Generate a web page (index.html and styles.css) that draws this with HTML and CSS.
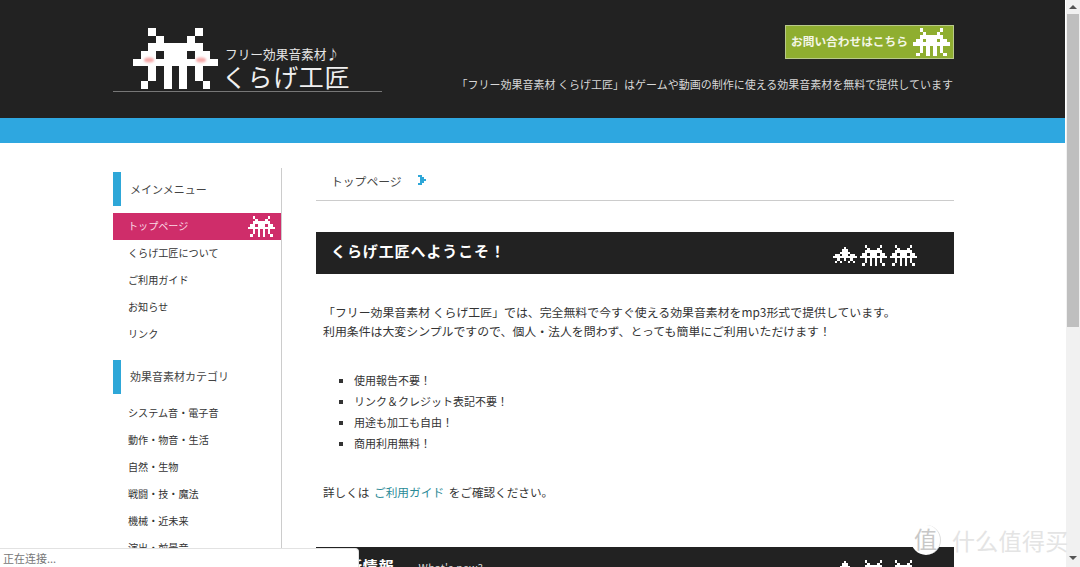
FILE: index.html
```html
<!DOCTYPE html>
<html lang="ja">
<head>
  <meta charset="UTF-8" />
  <meta name="viewport" content="width=device-width, initial-scale=1.0" />
  <title>フリー効果音素材 くらげ工匠</title>
  <link rel="stylesheet" href="styles.css">
</head>
<body>
  <svg class="defs" width="0" height="0" aria-hidden="true">
    <symbol id="invader" viewBox="0 0 11 8" preserveAspectRatio="none" shape-rendering="crispEdges">
      <path fill="currentColor" d="M2 0h1v1H2zM8 0h1v1H8zM3 1h1v1H3zM7 1h1v1H7zM2 2h7v1H2zM1 3h2v1H1zM4 3h3v1H4zM8 3h2v1H8zM0 4h11v1H0zM2 5h1v2H2zM4 5h1v2H4zM6 5h1v2H6zM8 5h1v2H8zM1 7h1v1H1zM4 7h1v1H4zM6 7h1v1H6zM9 7h1v1H9z"/>
    </symbol>
    <symbol id="squid" viewBox="0 0 11 8" preserveAspectRatio="none" shape-rendering="crispEdges">
      <path fill="currentColor" d="M5 0h1v1H5zM4 1h3v1H4zM3 2h5v1H3zM1 3h2v1H1zM4 3h3v1H4zM8 3h2v1H8zM0 4h11v1H0zM2 5h1v1H2zM5 5h1v1H5zM8 5h1v1H8zM1 6h1v1H1zM3 6h1v1H3zM7 6h1v1H7zM9 6h1v1H9z"/>
    </symbol>
  </svg>

  <div class="window">
    <div class="page">
      <header class="site-header">
        <div class="wrap header-inner">
          <a class="logo">
            <svg class="logo-mark">
              <use href="#invader"></use>
              <ellipse class="cheek" cx="16" cy="32" rx="5" ry="2.5"></ellipse>
              <ellipse class="cheek" cx="68" cy="32" rx="5" ry="2.5"></ellipse>
            </svg>
            <span class="logo-text">
              <span class="logo-sub">フリー効果音素材♪</span>
              <span class="logo-name">くらげ工匠</span>
            </span>
          </a>
          <div class="header-right">
            <a class="contact-btn">
              <span class="contact-label">お問い合わせはこちら</span>
              <svg class="contact-icon"><use href="#invader"></use></svg>
            </a>
            <p class="tagline">「フリー効果音素材 くらげ工匠」はゲームや動画の制作に使える効果音素材を無料で提供しています</p>
          </div>
        </div>
      </header>
      <div class="blue-band"></div>

      <div class="wrap columns">
        <nav class="sidebar">
          <h3 class="side-title">メインメニュー</h3>
          <ul class="side-list">
            <li class="active">トップページ<svg class="active-icon"><use href="#invader"></use></svg></li>
            <li>くらげ工匠について</li>
            <li>ご利用ガイド</li>
            <li>お知らせ</li>
            <li>リンク</li>
          </ul>
          <h3 class="side-title">効果音素材カテゴリ</h3>
          <ul class="side-list">
            <li>システム音・電子音</li>
            <li>動作・物音・生活</li>
            <li>自然・生物</li>
            <li>戦闘・技・魔法</li>
            <li>機械・近未来</li>
            <li>演出・前景音</li>
          </ul>
        </nav>

        <main class="main">
          <div class="breadcrumb">
            トップページ
            <svg class="crumb-arrow" viewBox="0 0 4 5" shape-rendering="crispEdges"><path fill="#2ea7d8" d="M0 0h2v1H0zM1 1h2v1H1zM1 2h3v1H1zM1 3h2v1H1zM0 4h2v1H0z"/></svg>
          </div>

          <h2 class="bar">
            くらげ工匠へようこそ！
            <span class="bar-icons">
              <svg class="bar-icon small"><use href="#squid"></use></svg>
              <svg class="bar-icon"><use href="#invader"></use></svg>
              <svg class="bar-icon"><use href="#invader"></use></svg>
            </span>
          </h2>

          <p class="intro">「フリー効果音素材 くらげ工匠」では、完全無料で今すぐ使える効果音素材をmp3形式で提供しています。<br>利用条件は大変シンプルですので、個人・法人を問わず、とっても簡単にご利用いただけます！</p>

          <ul class="points">
            <li>使用報告不要！</li>
            <li>リンク＆クレジット表記不要！</li>
            <li>用途も加工も自由！</li>
            <li>商用利用無料！</li>
          </ul>

          <p class="more">詳しくは <a class="link">ご利用ガイド</a> をご確認ください。</p>

          <h2 class="bar">
            <span>更新情報<small class="bar-sub">What's new?</small></span>
            <span class="bar-icons">
              <svg class="bar-icon small"><use href="#squid"></use></svg>
              <svg class="bar-icon"><use href="#invader"></use></svg>
              <svg class="bar-icon"><use href="#invader"></use></svg>
            </span>
          </h2>
        </main>
      </div>
    </div>

    <div class="scrollbar">
      <span class="arrow up"></span>
      <span class="thumb"></span>
      <span class="arrow down"></span>
    </div>
  </div>

  <div class="status">正在连接...</div>
  <div class="watermark">
    <span class="wm-badge">值</span>
    <span class="wm-text">什么值得买</span>
  </div>
</body>
</html>
```

FILE: styles.css
```css
html, body {
  margin: 0;
  height: 100%;
  overflow: hidden;
}

body {
  font-family: "Noto Sans CJK JP", "Noto Sans", sans-serif;
  font-size: 12px;
  color: #333;
  background: #fff;
}

.defs {
  position: absolute;
}

.window {
  display: flex;
  height: 567px;
}

.page {
  flex: 1;
  overflow: hidden;
  margin-right: 1px;
}

.wrap {
  width: 841px;
  margin-left: 113px;
}

/* header */
.site-header {
  height: 118px;
  background: #222;
}

.header-inner {
  display: flex;
  justify-content: space-between;
}

.logo {
  display: flex;
  width: 269px;
  height: 92px;
  box-sizing: border-box;
  padding: 28px 0 0 20px;
  border-bottom: 1px solid #777;
}

.logo-mark {
  width: 85px;
  height: 61px;
  color: #fff;
}

.cheek {
  fill: #f6a9a9;
  filter: blur(1px);
}

.logo-text {
  display: flex;
  flex-direction: column;
  margin-left: 7px;
  color: #e6e6e6;
}

.logo-sub {
  margin-top: 16px;
  font-size: 12.7px;
  line-height: 20px;
}

.logo-name {
  margin-left: -3px;
  font-size: 25px;
  line-height: 24px;
  letter-spacing: 0.6px;
  color: #f0f0f0;
}

.header-right {
  display: flex;
  flex-direction: column;
  align-items: flex-end;
  padding-top: 25px;
}

.contact-btn {
  display: flex;
  align-items: center;
  justify-content: space-between;
  width: 169px;
  height: 34px;
  box-sizing: border-box;
  padding: 0 3px 0 5px;
  background: #8fae30;
  border: 1px solid #b9c98a;
  color: #f4f6e6;
  font-size: 11.7px;
  font-weight: 700;
}

.contact-label {
  margin-bottom: 3px;
}

.contact-icon {
  width: 37px;
  height: 28px;
  color: #fff;
}

.tagline {
  margin: 17px 1px 0 0;
  color: #d8d8d8;
  font-size: 11px;
  line-height: 16px;
}

.blue-band {
  height: 25px;
  background: #2ea7e0;
}

/* columns */
.columns {
  display: flex;
  align-items: flex-start;
}

/* sidebar */
.sidebar {
  width: 168px;
  height: 424px;
  border-right: 1px solid #ccc;
  margin-top: 25px;
  padding-top: 4px;
}

.side-title {
  margin: 0 0 7px;
  height: 34px;
  padding-left: 9px;
  line-height: 34px;
  font-size: 11px;
  font-weight: 400;
  color: #444;
  border-left: 8px solid #2ea7d8;
  box-sizing: border-box;
}

.side-list + .side-title {
  margin-bottom: 6px;
  line-height: 32px;
}

.side-list {
  list-style: none;
  margin: 0 0 12px;
  padding: 0;
}

.side-list li {
  display: flex;
  align-items: center;
  justify-content: space-between;
  height: 27px;
  box-sizing: border-box;
  padding: 0 6px 2px 15px;
  font-size: 10.1px;
  color: #333;
}

.side-list .active {
  background: #cf2d6a;
  color: #fbdbe6;
}

.active-icon {
  width: 27px;
  height: 21px;
  margin-bottom: -2px;
  color: #fff;
}

/* main */
.main {
  flex: 1;
  margin-left: 34px;
  padding-top: 25px;
}

.breadcrumb {
  display: flex;
  align-items: center;
  gap: 16px;
  height: 24px;
  padding: 0 0 8px 15px;
  border-bottom: 1px solid #ccc;
  color: #444;
  font-size: 11.8px;
}

.crumb-arrow {
  width: 8px;
  height: 10px;
}

.bar {
  display: flex;
  align-items: center;
  justify-content: space-between;
  height: 42px;
  box-sizing: border-box;
  margin: 31px 0 0;
  padding: 0 37px 5px 15px;
  background: #222;
  color: #fff;
  font-size: 15px;
  font-weight: 700;
  letter-spacing: 0.9px;
}

.bar-sub {
  margin-left: 24px;
  font-size: 10.5px;
  font-weight: 400;
  letter-spacing: 0.3px;
  color: #ddd;
}

.bar-icons {
  display: flex;
  align-items: center;
  gap: 3px;
  padding-top: 10px;
}

.bar-icon {
  width: 27px;
  height: 21px;
  color: #fff;
}

.bar-icon.small {
  width: 24px;
  height: 18px;
}

.intro {
  margin: 29px 0 0 7px;
  font-size: 11.9px;
  line-height: 18.6px;
}

.points {
  list-style: square;
  margin: 29.6px 0 0;
  padding-left: 38px;
}

.points li {
  height: 21px;
  line-height: 21px;
  font-size: 11px;
}

.more {
  margin: 29px 0 0 7px;
  font-size: 11.6px;
  line-height: 18px;
}

.link {
  margin: 0 2px;
  color: #2a8a96;
  font-size: 11.7px;
}

.more + .bar {
  margin-top: 46px;
}

/* fake window chrome */
.scrollbar {
  display: flex;
  flex-direction: column;
  align-items: center;
  width: 14px;
  background: #f1f1f1;
}

.thumb {
  width: 12px;
  height: 313px;
  background: #bfbfbf;
}

.arrow {
  width: 0;
  height: 0;
  border-left: 4px solid transparent;
  border-right: 4px solid transparent;
}

.arrow.up {
  margin: 5px 0 5px;
  border-bottom: 4px solid #555;
}

.arrow.down {
  margin-top: auto;
  margin-bottom: 7px;
  border-top: 4px solid #555;
}

.status {
  position: absolute;
  left: 0;
  top: 548px;
  width: 359px;
  height: 19px;
  box-sizing: border-box;
  padding-left: 3px;
  background: #fff;
  border-top: 1px solid #e2e2e2;
  border-right: 1px solid #e2e2e2;
  border-top-right-radius: 4px;
  color: #777;
  font-family: "Noto Sans CJK SC", sans-serif;
  font-size: 11px;
  line-height: 18px;
}

.watermark {
  position: absolute;
  left: 911px;
  top: 525px;
  display: flex;
  align-items: center;
  gap: 11px;
  font-family: "Noto Sans CJK SC", sans-serif;
}

.wm-badge {
  width: 30px;
  height: 30px;
  box-sizing: border-box;
  border-radius: 50%;
  border-right: 1px solid #ddd;
  background: #fff;
  color: #c8c8c8;
  font-size: 23px;
  line-height: 27px;
  text-align: center;
}

.wm-text {
  color: #e4e4e4;
  font-size: 23px;
  line-height: 30px;
  letter-spacing: 0.3px;
}
```
